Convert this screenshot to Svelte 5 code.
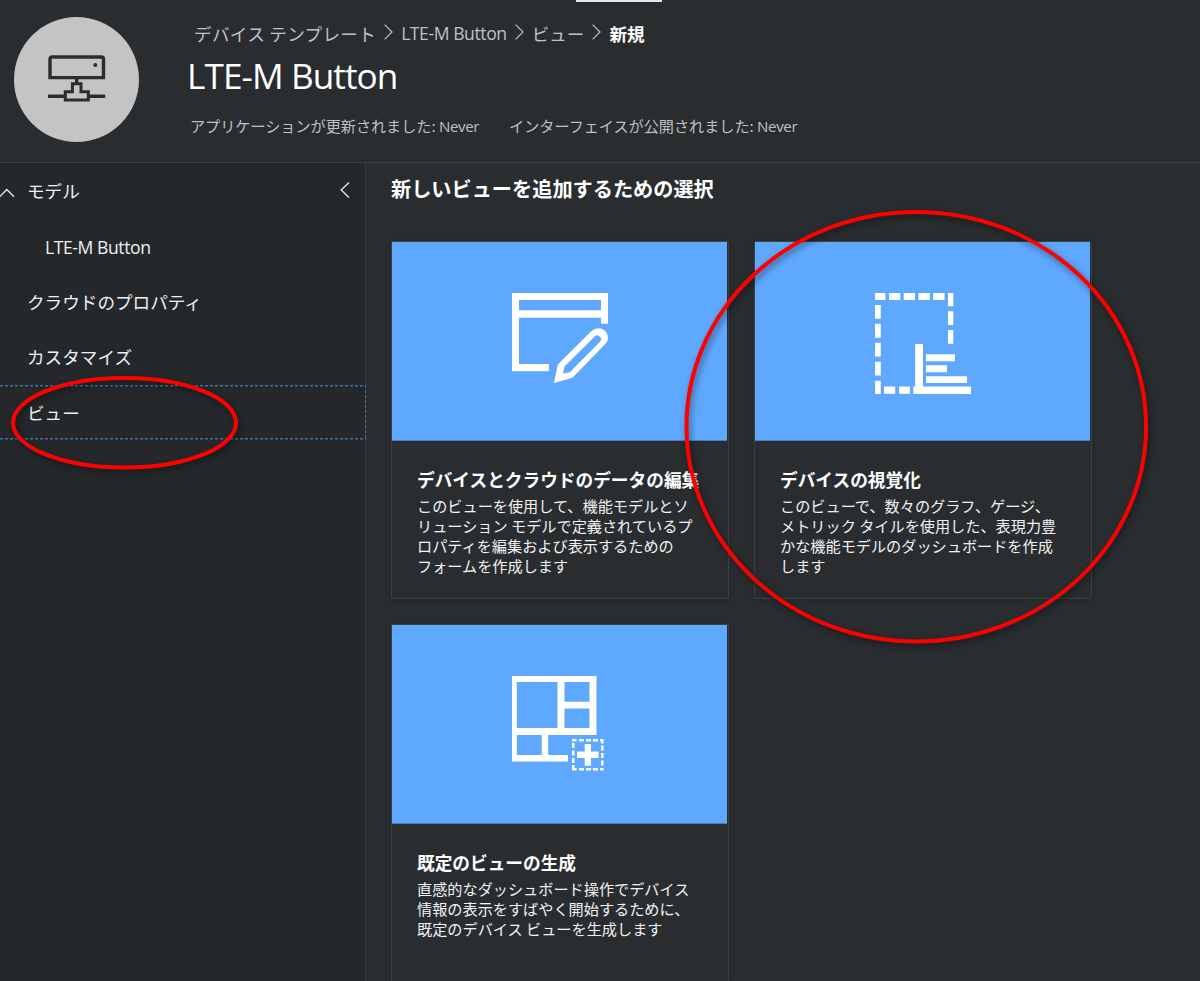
<script>
    let crumbs = ['デバイス テンプレート', 'LTE-M Button', 'ビュー'];

    let navItems = [
        { label: 'モデル', type: 'root' },
        { label: 'LTE-M Button', type: 'child' },
        { label: 'クラウドのプロパティ', type: '' },
        { label: 'カスタマイズ', type: '' },
        { label: 'ビュー', type: '' }
    ];
    let selected = 'ビュー';

    let cards = [
        {
            icon: 'edit',
            title: 'デバイスとクラウドのデータの編集',
            lines: [
                'このビューを使用して、機能モデルとソ',
                'リューション モデルで定義されているプ',
                'ロパティを編集および表示するための',
                'フォームを作成します'
            ]
        },
        {
            icon: 'visualize',
            title: 'デバイスの視覚化',
            lines: [
                'このビューで、数々のグラフ、ゲージ、',
                'メトリック タイルを使用した、表現力豊',
                'かな機能モデルのダッシュボードを作成',
                'します'
            ]
        },
        {
            icon: 'generate',
            title: '既定のビューの生成',
            lines: [
                '直感的なダッシュボード操作でデバイス',
                '情報の表示をすばやく開始するために、',
                '既定のデバイス ビューを生成します'
            ]
        }
    ];
</script>

<div class="page">
    <div class="tab-marker"></div>
    <header>
        <div class="avatar">
            <svg width="58" height="48" viewBox="0 0 58 48" fill="none" stroke="#292d30" stroke-width="3.4">
                <path d="M2 22.6V4.2Q2 2 4.2 2H53.3Q55.5 2 55.5 4.2V22.6Z" />
                <circle cx="47.3" cy="10" r="2" fill="#292d30" stroke="none" />
                <path d="M28.7 23V29M0 41.2H17M41 41.2H57.2" />
                <path d="M24.4 28.7H33V36.7H40.3V45H17.3V36.7H24.4Z" stroke-width="3" />
                <path d="M28.7 32V41M20 41.2H38" stroke="#c4c4c4" stroke-width="2.4" />
            </svg>
        </div>
        <div class="heading">
            <nav class="crumbs">
                {#each crumbs as crumb}
                    <span class:latin={crumb.startsWith('LTE')}>{crumb}</span>
                    <svg width="9" height="16" viewBox="0 0 9 16" fill="none" stroke="#bfc1c2" stroke-width="1.2"><path d="M.6 .6L8 8L.6 15.4" /></svg>
                {/each}
                <b>新規</b>
            </nav>
            <h1>LTE-M Button</h1>
            <div class="meta">
                <span>アプリケーションが更新されました: <i>Never</i></span>
                <span>インターフェイスが公開されました: <i>Never</i></span>
            </div>
        </div>
    </header>

    <div class="body">
        <aside>
            {#each navItems as item}
                <div class="item {item.type}" class:selected={item.label === selected}>
                    {#if item.type === 'root'}
                        <svg class="caret" width="16" height="10" viewBox="0 0 16 10" fill="none" stroke="#e4e5e5" stroke-width="1.4"><path d="M.6 8.8L7.8 1.4L15 8.8" /></svg>
                    {/if}
                    <span class:latin={item.type === 'child'}>{item.label}</span>
                    {#if item.type === 'root'}
                        <svg class="collapse" width="10" height="16" viewBox="0 0 10 16" fill="none" stroke="#e4e5e5" stroke-width="1.4"><path d="M9 .6L1.2 8L9 15.4" /></svg>
                    {/if}
                </div>
            {/each}
        </aside>

        <main>
            <h2>新しいビューを追加するための選択</h2>
            <div class="cards">
                {#each cards as card}
                    <div class="card">
                        <div class="tile">
                            {#if card.icon === 'edit'}
                                <svg viewBox="0 0 96 91" width="96" height="91">
                                    <path d="M0 0H96V30.7H89V24.7H7V71H37V78.3H0ZM7 7V17.2H89V7Z" fill="#fff" fill-rule="evenodd" />
                                    <path d="M42 90L45.8 71.5L79.5 38Q84 33.8 90.5 36Q96 39 96 45.5Q96 48.5 93.5 50.8L60.5 84.8ZM52.5 73.5L51 80.5L57.8 79.3L88 48.8Q90.2 46 88 43.8Q85.5 41 83.2 43.1Z" fill="#fff" fill-rule="evenodd" />
                                </svg>
                            {:else if card.icon === 'visualize'}
                                <svg viewBox="0 0 96 102" width="96" height="102" fill="#fff">
                                    <path d="M0 0H10.5V7H0ZM14 0H25.3V7H14ZM28.8 0H40V7H28.8ZM43.5 0H54.8V7H43.5ZM58.2 0H69.5V7H58.2Z" />
                                    <path d="M73 0H78.3V13.2H73ZM73 18.3H78.3V32H73ZM73 37H78.3V50.8H73Z" />
                                    <path d="M0 12H5.8V25.8H0ZM0 30.8H5.8V44.7H0ZM0 49.8H5.8V63.6H0ZM0 68.7H5.8V82.5H0ZM0 87.7H5.8V101H0Z" />
                                    <path d="M9 93.6H20.2V100.7H9ZM24 93.6H35V100.7H24ZM38.3 93.6H40.2V51H48V93.6H96V101H38.3Z" />
                                    <path d="M51 61.3H80V68.2H51ZM51 72.3H72V79.2H51ZM51 83.3H92V90H51Z" />
                                </svg>
                            {:else}
                                <svg viewBox="0 0 92 95" width="92" height="95">
                                    <path d="M0 0H84.5V59H36.2V79H56V85.5H0ZM4.8 6V52H45.5V6ZM52.5 6V25.7H77.5V6ZM52.5 32.4V52H77.5V32.4ZM4.8 59V79H29.7V59Z" fill="#fff" fill-rule="evenodd" />
                                    <path d="M60 63H64.5V65.5H60ZM67 63H72V65.5H67ZM74 63H79V65.5H74ZM81 63H86V65.5H81ZM88 63H91.6V67.5H89V65.5H88ZM60 92H64.5V94.5H60ZM67 92H72V94.5H67ZM74 92H79V94.5H74ZM81 92H86V94.5H81ZM88 92H91.6V94.5H88ZM60 67H62.5V72H60ZM60 74.5H62.5V79.5H60ZM60 82H62.5V87H60ZM60 89H62.5V93H60ZM89 69.5H91.6V74.5H89ZM89 77H91.6V82H89ZM89 84.5H91.6V89.5H89Z" fill="#fff" />
                                    <path d="M72.7 68H79V75.6H86.6V82H79V89.7H72.7V82H65V75.6H72.7Z" fill="#fff" />
                                </svg>
                            {/if}
                        </div>
                        <div class="text">
                            <h3>{card.title}</h3>
                            {#each card.lines as line}
                                <p>{line}</p>
                            {/each}
                        </div>
                    </div>
                {/each}
            </div>
        </main>
    </div>

    <!-- hand-drawn style callouts over the page -->
    <svg class="marks" width="1200" height="981" viewBox="0 0 1200 981" fill="none" stroke="#f00" stroke-width="4">
        <ellipse cx="124.5" cy="422.8" rx="111.5" ry="44.8" />
        <ellipse cx="916.3" cy="426.7" rx="229.8" ry="214.8" />
    </svg>
</div>

<style>
    :global(body) {
        background: #292d30;
    }
    .page {
        position: relative;
        width: 1200px;
        height: 981px;
        overflow: hidden;
        display: flex;
        flex-direction: column;
        background: #292d30;
        color: #fff;
        font-family: "Noto Sans CJK JP", sans-serif;
        font-size: 17.6px;
        white-space: nowrap;
    }
    .page * {
        box-sizing: border-box;
    }
    svg {
        display: block;
        flex: none;
    }
    .latin, h1, .meta i {
        font-family: "Open Sans", "Noto Sans", sans-serif;
        font-style: normal;
    }
    .latin {
        letter-spacing: -.44px;
    }
    .tab-marker {
        position: absolute;
        left: 576px;
        top: 0;
        width: 86px;
        height: 2px;
        background: #e8e8e8;
    }
    header {
        flex: none;
        height: 163px;
        display: flex;
        padding-left: 14px;
        border-bottom: 1px solid #3f4244;
    }
    .avatar {
        width: 125px;
        height: 125px;
        margin-top: 17px;
        padding: 37.5px 0 0 34.4px;
        border-radius: 50%;
        background: #c4c4c4;
    }
    .heading {
        padding: 20px 0 0 48px;
    }
    .crumbs {
        display: flex;
        align-items: center;
        height: 26px;
        padding-left: 7px;
        color: #bfc1c2;
    }
    .crumbs span:first-child {
        letter-spacing: .3px;
    }
    .crumbs svg {
        margin: -3px 8px 0;
    }
    .crumbs b {
        color: #fff;
    }
    h1 {
        margin: 5px 0 0;
        font-size: 35.2px;
        font-weight: 400;
        line-height: 48px;
        letter-spacing: -.92px;
    }
    .meta {
        display: flex;
        gap: 30px;
        margin-top: 15px;
        padding-left: 3px;
        font-size: 15.12px;
        line-height: 22px;
        color: #bfc1c2;
    }
    .meta i {
        letter-spacing: -.4px;
    }
    .body {
        flex: 1;
        min-height: 0;
        display: flex;
    }
    aside {
        flex: none;
        width: 366px;
        background: #24282b;
        border-right: 1px solid #3a3e40;
    }
    .item {
        display: flex;
        align-items: center;
        height: 55.4px;
        padding-left: 27px;
        color: #f0f0f0;
    }
    .item.root {
        padding-left: 0;
    }
    .item.child {
        padding: 2px 0 0 45px;
    }
    /* dotted focus outline, open on the left side */
    .item.selected {
        --dots: #41709f 0 3px, transparent 3px 5px;
        width: 366px;
        background:
            repeating-linear-gradient(90deg, var(--dots)) 0 0 / 100% 1.5px no-repeat,
            repeating-linear-gradient(90deg, var(--dots)) 0 100% / 100% 1.5px no-repeat,
            repeating-linear-gradient(180deg, var(--dots)) 100% 0 / 1.5px 100% no-repeat;
    }
    .caret {
        margin: 4px 12px 0 -1px;
    }
    .collapse {
        margin: -2px 15px 0 auto;
    }
    main {
        padding: 11px 0 0 25px;
    }
    h2 {
        margin: 0;
        font-size: 20.18px;
        font-weight: 700;
        line-height: 30px;
    }
    .cards {
        display: grid;
        grid-template-columns: 338px 338px;
        grid-auto-rows: 358px;
        gap: 25px;
        margin-top: 37px;
    }
    .card {
        border: 1px solid #3d4143;
        border-radius: 2px;
        box-shadow: 0 1px 4px rgba(0, 0, 0, .15);
    }
    .tile {
        height: 199px;
        width: 335px;
        padding: 51px 0 0 120px;
        background: #5fa8ff;
        border-bottom: 1px solid #4c7fbb;
    }
    .text {
        padding: 24.6px 0 0 25px;
    }
    h3 {
        margin: 0 0 3.4px;
        font-size: 17.68px;
        font-weight: 700;
        line-height: 26px;
    }
    p {
        margin: 0;
        font-size: 15.17px;
        line-height: 20.15px;
        color: #f2f2f2;
    }
    .marks {
        position: absolute;
        left: 0;
        top: 0;
        filter: drop-shadow(2px 3px 3px rgba(0, 0, 0, .45));
    }
</style>
